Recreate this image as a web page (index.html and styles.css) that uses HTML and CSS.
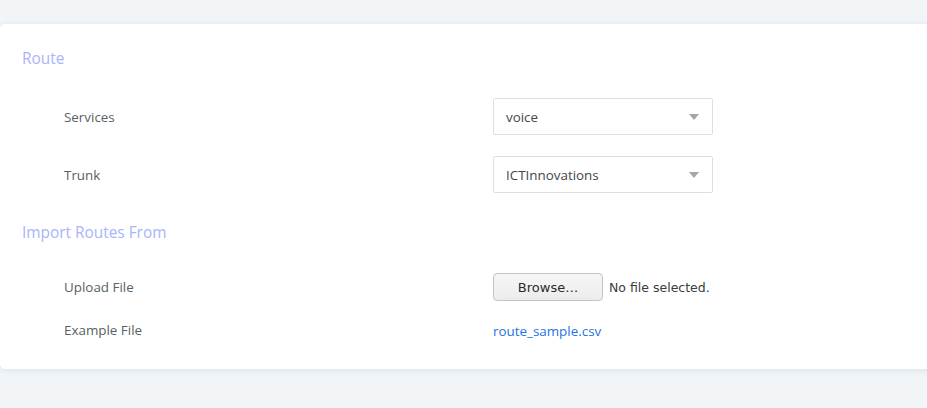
FILE: index.html
```html
<!DOCTYPE html>
<html>
<head>
<meta charset="utf-8">
<link rel="stylesheet" href="styles.css">
</head>
<body>
<div class="page">
  <div class="card">
    <h3 class="section-title">Route</h3>
    <div class="row row-select first">
      <div class="label">Services</div>
      <div class="control">
        <div class="select"><span>voice</span><span class="caret"></span></div>
      </div>
    </div>
    <div class="row row-select">
      <div class="label">Trunk</div>
      <div class="control">
        <div class="select"><span>ICTInnovations</span><span class="caret"></span></div>
      </div>
    </div>
    <h3 class="section-title second">Import Routes From</h3>
    <div class="row row-file">
      <div class="label">Upload File</div>
      <div class="control">
        <button class="browse">Browse…</button><span class="nofile">No file selected.</span>
      </div>
    </div>
    <div class="row row-link">
      <div class="label">Example File</div>
      <div class="control"><a class="link" href="#">route_sample.csv</a></div>
    </div>
  </div>
</div>
</body>
</html>
```
FILE: styles.css
```css
html, body {
  margin: 0;
  padding: 0;
}
body {
  background: #f1f5f8;
  font-family: "Open Sans", "Liberation Sans", sans-serif;
  width: 927px;
  height: 408px;
  overflow: hidden;
}
.page {
  padding-top: 24px;
}
.card {
  background: #fff;
  border-radius: 5px 0 0 5px;
  width: 960px;
  height: 345px;
  box-sizing: border-box;
  padding: 0 0 0 22px;
  box-shadow: 0 1px 6px rgba(40, 60, 80, 0.10);
}
.section-title {
  margin: 0;
  font-weight: 400;
  font-size: 15.4px;
  color: #a8b4fb;
  height: 24px;
  line-height: 24px;
  padding-top: 23px;
}
.section-title.second {
  padding-top: 28px;
}
.row {
  display: flex;
  align-items: center;
  padding-left: 42px;
}
.label {
  width: 429px;
  font-size: 13.4px;
  color: #585f66;
}
.row-select {
  height: 37px;
  margin-top: 21px;
}
.row-select.first {
  margin-top: 27px;
}
.select {
  width: 220px;
  height: 37px;
  box-sizing: border-box;
  border: 1px solid #dcdfe3;
  border-radius: 2px;
  display: flex;
  align-items: center;
  justify-content: space-between;
  padding: 0 13px 0 12px;
  font-size: 13.4px;
  color: #3f464c;
}
.caret {
  width: 0;
  height: 0;
  border-left: 5.5px solid transparent;
  border-right: 5.5px solid transparent;
  border-top: 6px solid #a3a6a9;
}
.row-file {
  height: 28px;
  margin-top: 28px;
}
.browse {
  width: 110px;
  height: 28px;
  box-sizing: border-box;
  border: 1px solid #c4c4c4;
  border-radius: 4px;
  background: linear-gradient(#f6f6f6, #ececec);
  font-family: "DejaVu Sans", sans-serif;
  font-size: 13px;
  color: #2b2b2b;
  padding: 0;
}
.nofile {
  font-family: "DejaVu Sans", sans-serif;
  font-size: 12.5px;
  color: #3b3b3b;
  margin-left: 6px;
}
.row-link {
  height: 20px;
  margin-top: 19px;
}
.link {
  font-size: 13.4px;
  color: #1f73e3;
  text-decoration: none;
}
```
